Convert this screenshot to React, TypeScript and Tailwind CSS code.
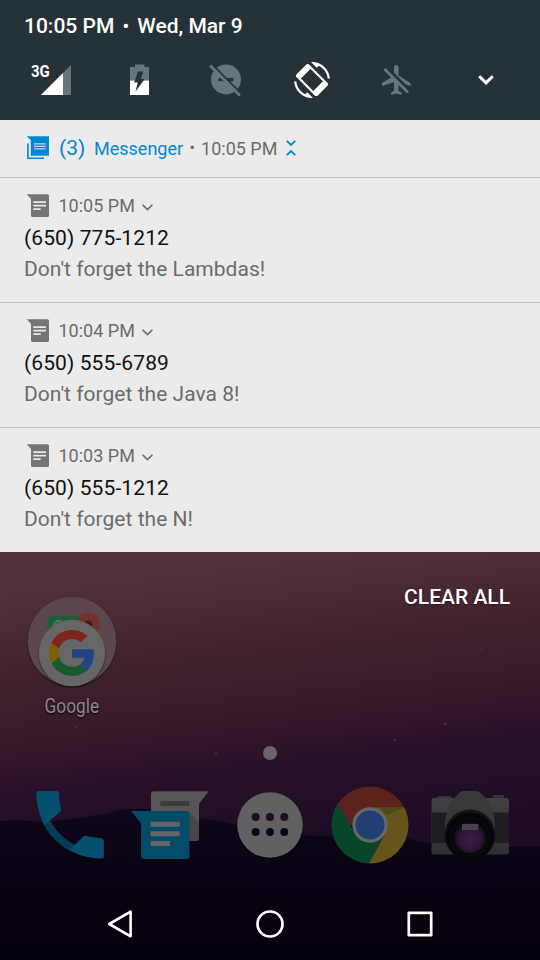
import type { ReactNode } from "react";

function SignalIcon() {
  return (
    <svg width="46" height="36" viewBox="28 62 46 36">
      <path d="M71 65V95H41Z" fill="#69757a" />
      <path d="M63 73V95H41Z" fill="#fff" />
    </svg>
  );
}

function BatteryIcon() {
  return (
    <svg width="36" height="36" viewBox="122 62 36 36">
      <path d="M130 80.500V67H135V64.500H144.500V67H149V80.500Z" fill="#69757a" />
      <path d="M130 80.500H149V95H130Z" fill="#fff" />
      <path d="M138 71.500H143.300L141 79H144.700L135.600 91.500L137.700 82.600H134.200Z" fill="#263238" />
    </svg>
  );
}

function DndOffIcon() {
  return (
    <svg width="36" height="36" viewBox="208 62 36 36">
      <circle cx="226" cy="79.500" r="15" fill="#69757a" />
      <path d="M218.500 77.900H233.500V81.200H218.500Z" fill="#263238" />
      <path d="M211.600 63.900L243 95.300" stroke="#263238" strokeWidth="1.800" />
      <path d="M210 65.500L239.900 95.400" stroke="#69757a" strokeWidth="2.800" />
    </svg>
  );
}

function RotateIcon() {
  return (
    <svg width="36" height="36" viewBox="0 0 24 24" fill="#fff">
      <path d="M16.480 2.520c3.270 1.550 5.610 4.720 5.970 8.480h1.500C23.440 4.840 18.290 0 12 0l-.66.03 3.810 3.810 1.330-1.320z" />
      <path d="M7.520 21.480C4.250 19.940 1.910 16.760 1.550 13H.05C.56 19.160 5.710 24 12 24l.66-.03-3.810-3.810-1.330 1.320z" />
      <path
        fillRule="evenodd"
        d="M10.230 1.750c-.59-.59-1.540-.59-2.120 0L1.750 8.110c-.59.59-.59 1.540 0 2.120l12.020 12.020c.59.59 1.540.59 2.120 0l6.360-6.360c.59-.59.59-1.540 0-2.120zM11 4.600L19.300 12.900L12.900 19.300L4.600 11z"
      />
    </svg>
  );
}

function AirplaneOffIcon() {
  return (
    <svg className="mr-0.5" width="36" height="36" viewBox="0 0 24 24" fill="#69757a">
      <path d="M13 9V3.500c0-.83-.67-1.500-1.500-1.500S10 2.670 10 3.500v3.680l7.830 7.830L21 16v-2l-8-5zM3 5.270l4.990 4.990L2 14v2l8-2.500V19l-2 1.500V22l3.500-1 3.500 1v-1.500L13 19v-3.730L18.730 21 20 19.730 4.270 4 3 5.270z" />
    </svg>
  );
}

function Chevron({ size, color, width }: { size: number; color: string; width: number }) {
  return (
    <svg width={size} height={size} viewBox="0 0 18 18" fill="none" stroke={color} strokeWidth={width}>
      <path d="M2.200 5.200L9 11.900L15.800 5.200" />
    </svg>
  );
}

function MessageIcon() {
  return (
    <svg width="24" height="24" viewBox="26 194 24 24">
      <path d="M26.800 194.200H47.500Q49 194.200 49 195.700V215.500Q49 217 47.500 217H32.500Q31 217 31 215.500V199Z" fill="#757575" />
      <path d="M33.300 202.200H46M33.300 205.700H46M33.300 209.100H40.700" stroke="#ebebeb" strokeWidth="1.800" />
    </svg>
  );
}

function MessageGroupIcon() {
  return (
    <svg width="24" height="24" viewBox="26 136 24 24">
      <path d="M26.600 136.200H49V155.700H30.800V140Z" fill="#0288d1" />
      <path d="M27.900 143.500V158.200H44" fill="none" stroke="#0288d1" strokeWidth="1.600" />
      <path d="M34 143.800H45.700M34 146.300H45.700M34 148.800H45.700" stroke="#b5d7ea" strokeWidth="1.300" />
    </svg>
  );
}

function CollapseIcon() {
  return (
    <svg width="12" height="18" viewBox="0 0 12 18" fill="none" stroke="#0288d1" strokeWidth="1.900">
      <path d="M1.800 1.800L6 6L10.200 1.800M1.800 16.200L6 12L10.200 16.200" />
    </svg>
  );
}

function Cell({ children }: { children: ReactNode }) {
  return <div className="flex w-[86px] items-center justify-center">{children}</div>;
}

function QuickSettings() {
  return (
    <header className="h-[120px] bg-[#263238] pt-[13px] text-white">
      <div className="flex h-7 items-center gap-[7px] pl-6 text-[21px] font-medium">
        <span>10:05 PM</span>
        <span className="w-[9px] text-center text-[19px]">•</span>
        <span>Wed, Mar 9</span>
      </div>
      <div className="mt-[20.500px] flex h-[36px] items-center pl-[11px]">
        <Cell>
          <div className="relative ml-[-6px]">
            <SignalIcon />
            <span className="absolute top-[1.500px] left-[2.500px] origin-left scale-x-[0.88] text-[17px] leading-[17px] font-bold">3G</span>
          </div>
        </Cell>
        <Cell><BatteryIcon /></Cell>
        <Cell><DndOffIcon /></Cell>
        <Cell><RotateIcon /></Cell>
        <Cell><AirplaneOffIcon /></Cell>
        <div className="flex w-[90px] justify-center">
          <Chevron size={18} color="#fff" width={3} />
        </div>
      </div>
    </header>
  );
}

const messages = [
  { time: "10:05 PM", from: "(650) 775-1212", text: "Don't forget the Lambdas!" },
  { time: "10:04 PM", from: "(650) 555-6789", text: "Don't forget the Java 8!" },
  { time: "10:03 PM", from: "(650) 555-1212", text: "Don't forget the N!" },
];

function Notifications() {
  return (
    <main className="bg-[#ebebeb]">
      <div className="flex h-[57px] items-center pl-[26px] text-[18px] text-[#0288d1]">
        <div className="mb-[1px]"><MessageGroupIcon /></div>
        <span className="ml-[9px] w-[35px] text-[21px]">(3)</span>
        <span className="mb-[1px]">Messenger</span>
        <span className="mb-[1px] ml-[5px] w-[8px] text-center text-[16px] text-[#666]">•</span>
        <span className="mb-[1px] ml-[5px] text-[#6b6b6b]">10:05 PM</span>
        <span className="mb-[2px] ml-[8px]"><CollapseIcon /></span>
      </div>
      {messages.map((m) => (
        <article key={m.time} className="h-[125px] border-t border-[#bdbdbd] pt-[14px]">
          <div className="flex h-7 items-center pl-[26px] text-[18px] text-[#6b6b6b]">
            <MessageIcon />
            <span className="mr-[6.500px] mb-[1px] ml-[8.500px]">{m.time}</span>
            <div className="mt-[2px]"><Chevron size={13} color="#6b6b6b" width={2.300} /></div>
          </div>
          <h2 className="mt-[1px] h-[31px] pl-6 text-[21px] leading-[34px] tracking-[0.1px] text-[#111]">{m.from}</h2>
          <p className="h-[31px] pl-6 text-[21px] leading-[34px] tracking-[0.030px] text-[#6b6b6b]">{m.text}</p>
        </article>
      ))}
    </main>
  );
}

function Wallpaper() {
  return (
    <svg className="absolute inset-0" width="540" height="408" viewBox="0 552 540 408">
      <defs>
        <linearGradient id="sky" gradientUnits="userSpaceOnUse" x1="240" y1="545" x2="275" y2="845">
          <stop offset="0" stopColor="#51323b" />
          <stop offset="0.200" stopColor="#492934" />
          <stop offset="0.400" stopColor="#3e1f2c" />
          <stop offset="0.620" stopColor="#351628" />
          <stop offset="0.730" stopColor="#281126" />
          <stop offset="1" stopColor="#1c0c26" />
        </linearGradient>
        <linearGradient id="hill" x1="0" y1="0" x2="0" y2="1">
          <stop offset="0" stopColor="#0e061a" />
          <stop offset="0.600" stopColor="#08020f" />
          <stop offset="1" stopColor="#05010b" />
        </linearGradient>
      </defs>
      <path d="M0 552H540V960H0Z" fill="url(#sky)" />
      <path d="M0 821Q20 819 42 822Q90 818 125 809Q155 807 190 817Q230 822 260 831Q300 836 335 836Q370 830 410 839Q450 850 540 846V960H0Z" fill="url(#hill)" />
      <g fill="#67302f" opacity="0.750">
        <circle cx="395" cy="740" r="1.100" />
        <circle cx="445.500" cy="724" r="1.400" />
        <circle cx="481" cy="649.500" r="1" />
        <circle cx="216" cy="753" r="1" />
        <circle cx="76" cy="727" r="1" />
      </g>
    </svg>
  );
}

function GoogleFolder() {
  return (
    <svg width="96" height="96" viewBox="24 594 96 96">
      <circle cx="72" cy="642.500" r="45" fill="#000" opacity="0.250" />
      <circle cx="72" cy="641.300" r="44.300" fill="#5c474f" />
      <rect x="47.500" y="616" width="40" height="26" rx="3" fill="#1d5e39" />
      <path d="M53.500 625Q56 620 61 621" fill="none" stroke="#597564" strokeWidth="2" />
      <circle cx="88" cy="624" r="11.800" fill="#723229" />
      <circle cx="88" cy="625" r="4.500" fill="#3b1b19" />
      <circle cx="72" cy="654.500" r="34" fill="#000" opacity="0.220" />
      <circle cx="72" cy="653" r="33.200" fill="#666" />
      <g transform="translate(49 630) scale(0.957)">
        <path fill="#7b251d" d="M24 9.500c3.540 0 6.710 1.220 9.210 3.600l6.850-6.850C35.900 2.380 30.470 0 24 0 14.620 0 6.510 5.380 2.560 13.220l7.980 6.190C12.430 13.720 17.740 9.500 24 9.500z" />
        <path fill="#214482" d="M46.980 24.550c0-1.570-.15-3.090-.38-4.550H24v9.020h12.940c-.58 2.960-2.260 5.480-4.780 7.180l7.730 6c4.510-4.180 7.090-10.360 7.090-17.650z" />
        <path fill="#7e6004" d="M10.530 28.590c-.48-1.450-.76-2.990-.76-4.590s.27-3.140.76-4.590l-7.980-6.190C.92 16.460 0 20.120 0 24c0 3.880.92 7.540 2.560 10.780l7.970-6.190z" />
        <path fill="#195a2c" d="M24 48c6.480 0 11.930-2.130 15.890-5.810l-7.730-6c-2.150 1.450-4.920 2.300-8.160 2.300-6.260 0-11.570-4.220-13.470-9.910l-7.980 6.190C6.510 42.620 14.620 48 24 48z" />
      </g>
    </svg>
  );
}

function PhoneApp() {
  return (
    <svg width="80" height="80" viewBox="30 785 80 80">
      <g transform="translate(25.100 779.800) scale(3.750)">
        <path fill="#04506f" d="M6.620 10.790c1.440 2.830 3.760 5.140 6.590 6.590l2.200-2.200c.27-.27.67-.36 1.020-.24 1.120.37 2.330.57 3.570.57.55 0 1 .45 1 1V20.500c0 .28-.22.5-.5.5C10.610 21 3 13.390 3 3.500c0-.28.22-.5.5-.5H8.500c.3 0 .5.2.5.5 0 1.500.2 2.950.57 4.070.11.35.03.74-.25 1.020z" />
        <path fill="#063b56" d="M6.620 10.790c1.440 2.830 3.760 5.140 6.590 6.590l-1.500 1.350C8.600 17 6.500 14.800 5.150 12.250z" />
      </g>
    </svg>
  );
}

function MessengerApp() {
  return (
    <svg width="80" height="80" viewBox="130 785 80 80">
      <path d="M154 791.300H208.700L199 804V838Q199 841 196 841H154Q151 841 151 838V794.300Q151 791.300 154 791.300Z" fill="#565656" />
      <path d="M160.300 801H189.200V806H160.300Z" fill="#3b3b3b" />
      <path d="M188 811L199 822V838Q199 841 196 841H188Z" fill="#474747" />
      <path d="M131.300 811H186.500Q189.500 811 189.500 814V856Q189.500 859 186.500 859H144Q141 859 141 856V823.500Z" fill="#044a69" />
      <path d="M150.600 824.200H179.700M150.600 833.800H179.700M150.600 843.500H170" stroke="#666" strokeWidth="4.900" />
    </svg>
  );
}

function AllAppsButton() {
  return (
    <svg width="80" height="80" viewBox="230 785 80 80">
      <circle cx="270" cy="826" r="33.500" fill="#000" opacity="0.300" />
      <circle cx="270" cy="825" r="32.800" fill="#616161" />
      <g fill="#1d0e26">
        {[255.6, 270, 284.3].map((x) => <circle key={x} cx={x} cy="817" r="4" />)}
      </g>
      <g fill="#0c0516">
        {[255.6, 270, 284.3].map((x) => <circle key={x} cx={x} cy="832" r="4" />)}
      </g>
    </svg>
  );
}

function ChromeApp() {
  return (
    <svg width="80" height="80" viewBox="330 785 80 80">
      <defs>
        <clipPath id="disc"><circle cx="370" cy="825" r="38.500" /></clipPath>
      </defs>
      <g clipPath="url(#disc)">
        <path d="M330 785H410V825H330Z" fill="#5c231c" />
        <path d="M338.300 804.500L354.800 833.800L370 842L385 833.800L368.300 864H330V804Z" fill="#08462a" />
        <path d="M370 807.500H410V864H368.300L385.200 833.800Z" fill="#66541d" />
        <path d="M380 807.500H405L386 815Z" fill="#56461b" />
      </g>
      <circle cx="370" cy="825" r="17.700" fill="#676767" />
      <circle cx="370" cy="825" r="14.500" fill="#213f73" />
    </svg>
  );
}

function CameraApp() {
  return (
    <svg width="80" height="80" viewBox="430 785 80 80">
      <defs>
        <linearGradient id="body" x1="0" y1="0" x2="0" y2="1">
          <stop offset="0" stopColor="#414144" />
          <stop offset="1" stopColor="#303034" />
        </linearGradient>
        <radialGradient id="glass" cx="0.500" cy="0.550" r="0.550">
          <stop offset="0" stopColor="#3e1e46" />
          <stop offset="0.650" stopColor="#2e1535" />
          <stop offset="1" stopColor="#0d0812" />
        </radialGradient>
      </defs>
      <path d="M437 799V796H451V799ZM493 799V795H504V799Z" fill="#333337" />
      <rect x="431.500" y="798" width="77.500" height="56.500" rx="2.500" fill="url(#body)" />
      <path d="M431.500 812.500H509V843H431.500Z" fill="#1e1e22" />
      <path d="M445 832Q444 816 451 801L461 791.500Q462 791 463 791H477Q478 791 479 791.500L489 801Q496 816 495 832Z" fill="#38383b" />
      <circle cx="470" cy="835" r="25.500" fill="#141417" />
      <circle cx="470" cy="836.500" r="24" fill="#060609" />
      <circle cx="470" cy="836.500" r="19" fill="none" stroke="#0e0e11" strokeWidth="1.200" />
      <circle cx="470" cy="837.500" r="15.800" fill="url(#glass)" />
      <path d="M462 824H478.300V830H462Z" fill="#4b4050" />
    </svg>
  );
}

function HomeScreen() {
  return (
    <section className="relative h-[408px] overflow-hidden">
      <Wallpaper />
      <div className="relative flex h-full flex-col">
        <div className="flex h-[194px] justify-between pt-[42px] pr-[30px] pl-6">
          <div className="flex w-24 flex-col items-center">
            <GoogleFolder />
            <span className="mt-[3px] scale-x-[0.860] text-[20px] leading-[26px] tracking-[0.1px] text-[#8d888b] [text-shadow:0_1px_2px_#000]">Google</span>
          </div>
          <button className="mt-[-11px] h-7 text-[21px] leading-7 font-medium text-white [text-shadow:0_1px_2px_#0006]">CLEAR ALL</button>
        </div>
        <div className="mx-auto h-[14px] w-[14px] rounded-full bg-[#686669]" />
        <div className="mt-[25px] flex h-20 gap-5 pl-[30px]">
          <PhoneApp />
          <MessengerApp />
          <AllAppsButton />
          <ChromeApp />
          <CameraApp />
        </div>
        <nav className="mt-[39px] flex h-10 items-center gap-[110px] pl-[100px]">
          <svg width="40" height="40" viewBox="100 904 40 40" fill="none" stroke="#fff" strokeWidth="2.600" strokeLinejoin="round">
            <path d="M109.300 924L130.600 911.700V936.300Z" />
          </svg>
          <svg width="40" height="40" viewBox="250 904 40 40" fill="none" stroke="#fff" strokeWidth="2.700">
            <circle cx="270" cy="924" r="12.500" />
          </svg>
          <svg width="40" height="40" viewBox="400 904 40 40" fill="none" stroke="#fff" strokeWidth="2.700" strokeLinejoin="round">
            <path d="M408.800 912.800H431.200V935.200H408.800Z" />
          </svg>
        </nav>
      </div>
    </section>
  );
}

export default function App() {
  return (
    <div className="h-[960px] w-[540px] overflow-hidden font-['Roboto',sans-serif]">
      <QuickSettings />
      <Notifications />
      <HomeScreen />
    </div>
  );
}
